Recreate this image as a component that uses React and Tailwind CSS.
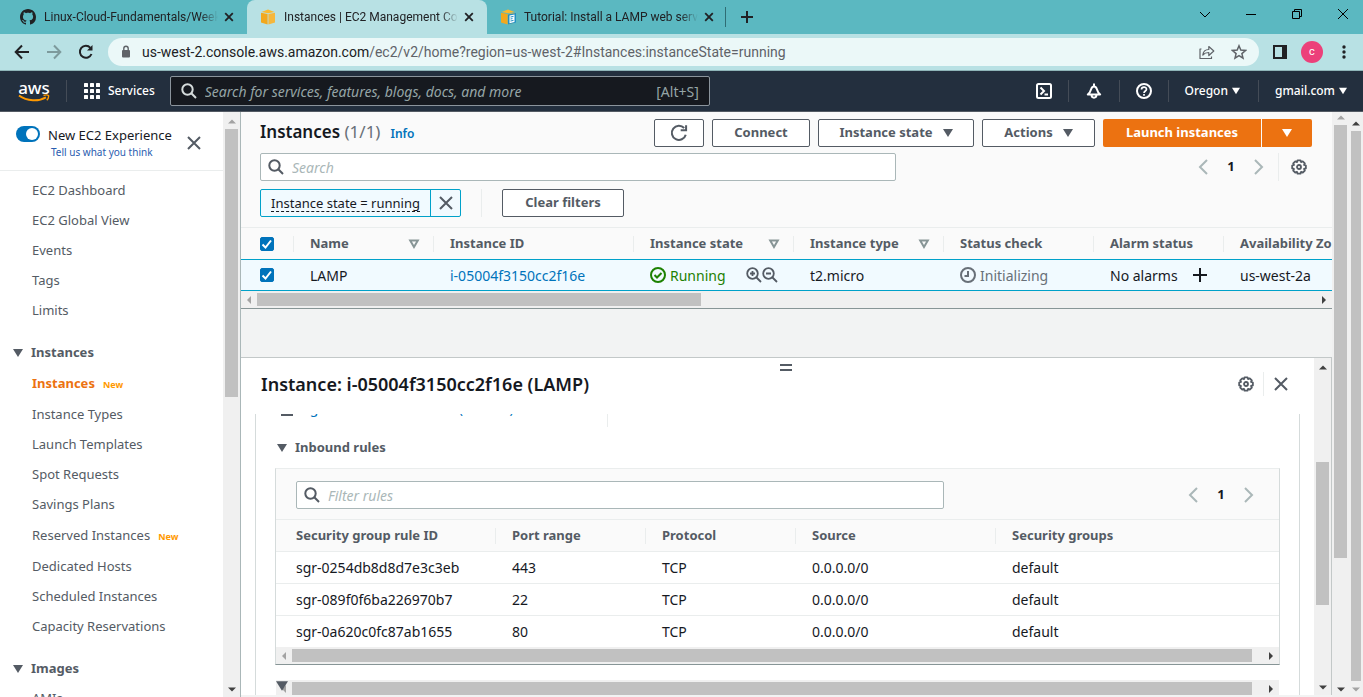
import React from "react";

const UI = "font-['Noto_Sans','Open_Sans',sans-serif]";
const CHROME = "font-[Roboto,'Noto_Sans',sans-serif]";

function Triangle({ className = "h-2.5 w-2.5", dir = "down" }) {
  const d = {
    down: "M0 1h10L5 9z",
    up: "M1 7.5h8L5 3.5z",
    left: "M7 1v8L3 5z",
    right: "M3 1v8L7 5z",
    smalldown: "M1 3.5h8L5 7.5z",
  }[dir];
  return (
    <svg viewBox="0 0 10 10" className={`shrink-0 ${className}`} fill="currentColor" aria-hidden="true">
      <path d={d} />
    </svg>
  );
}

function Icon({ children, className = "h-4 w-4", width = 2, box = 16 }) {
  return (
    <svg
      viewBox={`0 0 ${box} ${box}`}
      className={`shrink-0 ${className}`}
      fill="none"
      stroke="currentColor"
      strokeWidth={width}
      aria-hidden="true"
    >
      {children}
    </svg>
  );
}

const SearchIcon = ({ className }) => (
  <Icon className={className}>
    <circle cx="6.5" cy="6.5" r="5.2" />
    <path d="M10.3 10.3 15 15" />
  </Icon>
);
const CloseIcon = ({ className = "h-4 w-4" }) => (
  <Icon className={className}>
    <path d="M2 2l12 12M14 2 2 14" />
  </Icon>
);
const TabClose = () => (
  <Icon className="h-2.5 w-2.5" box={10} width={1.8}>
    <path d="M1.2 1.2l7.6 7.6M8.8 1.2 1.2 8.8" />
  </Icon>
);
const GearIcon = () => (
  <Icon>
    <path
      d="M6.7 1h2.6l.5 1.6 1.5-.7 1.8 1.8-.7 1.5 1.6.5v2.6l-1.6.5.7 1.5-1.8 1.8-1.5-.7-.5 1.6H6.7l-.5-1.6-1.5.7-1.8-1.8.7-1.5L2 8.3V5.7l1.6-.5-.7-1.5 1.8-1.8 1.5.7z"
      transform="translate(-1.1 .2) scale(1.14 1.11)"
      strokeWidth="1.6"
      strokeLinejoin="round"
    />
    <circle cx="8" cy="8" r="2" strokeWidth="1.8" />
  </Icon>
);
const ChevronLeft = () => (
  <Icon className="h-4 w-4">
    <path d="M12 1 5 8l7 7" />
  </Icon>
);
const ChevronRight = () => (
  <Icon className="h-4 w-4">
    <path d="M4 1l7 7-7 7" />
  </Icon>
);
const SortIcon = () => (
  <Icon className="h-3 w-3 text-[#879596]" box={12}>
    <path d="M2.2 2.5h7.6L6 9z" />
  </Icon>
);

function Cube({ doc }) {
  return (
    <svg viewBox="0 0 16 16" className="h-4 w-4 shrink-0" aria-hidden="true">
      <path fill="#f2a81d" d="M1 3.8 7.6 5v10.4L1 13.5z" />
      <path fill="#f6b73c" d="M8.4 5 15 3.8v9.7l-6.6 1.9z" />
      <path fill="#fbb92d" d="M1.4 3 8 .6 14.6 3 8 4.3z" />
      {doc && (
        <g>
          <path fill="#1f8fc4" d="M8 5.500l8-1.500v9.500l-8 2z" />
          <path fill="#fff" d="M9.5 6.500l5-1v7.500l-5 1.200z" />
          <path stroke="#1f8fc4" d="M10.5 8l3-.6M10.5 10l2-.4M10.5 12l3-.6" />
        </g>
      )}
    </svg>
  );
}

function VScroll({ thumb, topMuted, bottomMuted, className = "w-[17px] pt-1" }) {
  return (
    <div className={`flex shrink-0 flex-col items-center bg-[#f0f0f0] px-0.5 ${className}`}>
      <Triangle dir="up" className={`mb-[3px] h-2.5 w-2.5 ${topMuted ? "text-[#a3a3a3]" : "text-[#404040]"}`} />
      <div className="flex w-full flex-1 flex-col">
        <div className={`w-full bg-[#c1c1c1] ${thumb}`} />
      </div>
      <Triangle dir="smalldown" className={`my-[3px] h-2.5 w-2.5 ${bottomMuted ? "text-[#a3a3a3]" : "text-[#404040]"}`} />
    </div>
  );
}

function HScroll({ thumb }) {
  return (
    <div className="flex h-[17px] shrink-0 items-center bg-[#f0f0f0]">
      <div className="flex w-4 shrink-0 justify-center">
        <Triangle dir="left" className="h-2.5 w-2.5 text-[#a3a3a3]" />
      </div>
      <div className="min-w-0 flex-1">
        <div className={`h-[13px] bg-[#c1c1c1] ${thumb}`} />
      </div>
      <div className="flex w-[17px] shrink-0 justify-center">
        <Triangle dir="right" className="h-2.5 w-2.5 text-[#404040]" />
      </div>
    </div>
  );
}

function BrowserTab({ icon, title, active }) {
  return (
    <div className={`flex w-60 shrink-0 items-center px-[13px] ${active ? "rounded-t-lg bg-[#b8e1e4]" : ""}`}>
      {icon}
      <span className="ml-2 w-[177px] overflow-hidden whitespace-nowrap text-[12px] [mask-image:linear-gradient(to_right,black_90%,transparent)]">
        {title}
      </span>
      <button aria-label="Close tab" className="ml-1.5">
        <TabClose />
      </button>
    </div>
  );
}

function BrowserChrome() {
  return (
    <div className={`shrink-0 text-[#202124] ${CHROME}`}>
      <div className="flex h-[34px] bg-[#5bb8c1]">
        <div className="flex pl-[7px]">
          <BrowserTab
            title="Linux-Cloud-Fundamentals/Week"
            icon={
              <svg viewBox="0 0 16 16" className="h-4 w-4 shrink-0" fill="currentColor" aria-hidden="true">
                <path d="M8 0C3.58 0 0 3.58 0 8c0 3.54 2.29 6.53 5.47 7.59.4.07.55-.17.55-.38 0-.19-.01-.82-.01-1.49-2.01.37-2.53-.49-2.69-.94-.09-.23-.48-.94-.82-1.13-.28-.15-.68-.52-.01-.53.63-.01 1.08.58 1.23.82.72 1.21 1.87.87 2.33.66.07-.52.28-.87.51-1.07-1.78-.2-3.64-.89-3.64-3.95 0-.87.31-1.59.82-2.15-.08-.2-.36-1.02.08-2.12 0 0 .67-.21 2.2.82.64-.18 1.32-.27 2-.27s1.36.09 2 .27c1.53-1.04 2.2-.82 2.2-.82.44 1.1.16 1.92.08 2.12.51.56.82 1.27.82 2.15 0 3.07-1.87 3.75-3.65 3.95.29.25.54.73.54 1.48 0 1.07-.01 1.93-.01 2.2 0 .21.15.46.55.38A8.01 8.01 0 0 0 16 8c0-4.42-3.58-8-8-8z" />
              </svg>
            }
          />
          <BrowserTab active title="Instances | EC2 Management Con" icon={<Cube />} />
          <BrowserTab title="Tutorial: Install a LAMP web serve" icon={<Cube doc />} />
        </div>
        <span className="ml-[-2px] h-5 w-px self-center bg-[#2f6d74]" />
        <button aria-label="New tab" className="ml-2.5 px-1">
          <Icon className="h-3.5 w-3.5" box={14}>
            <path d="M7 1v12M1 7h12" />
          </Icon>
        </button>
        <div className="ml-auto flex items-center gap-9 pr-[15px] pb-1.5 text-black">
          <button aria-label="Search tabs">
            <Icon className="h-2.5 w-2.5" box={10} width={1}>
              <path d="M0 3l5 5 5-5" />
            </Icon>
          </button>
          <button aria-label="Minimize">
            <Icon className="h-2.5 w-2.5" box={10} width={1}>
              <path d="M0 5.5h10" />
            </Icon>
          </button>
          <button aria-label="Restore">
            <Icon className="h-2.5 w-2.5" box={10} width={1}>
              <path d="M.5 2.5h7v7h-7zM2.5 2V.5h7v7H8" />
            </Icon>
          </button>
          <button aria-label="Close window">
            <Icon className="h-2.5 w-2.5" box={10} width={1}>
              <path d="M0 0l10 10M10 0 0 10" />
            </Icon>
          </button>
        </div>
      </div>
      <div className="flex h-[37px] items-center border-b border-[#8fb5b8] bg-[#b8e1e4] pr-3">
        <div className="flex w-[108px] items-center gap-4 pl-3.5">
          <button aria-label="Back">
            <Icon>
              <path d="M15 8H2M8 1.5 1.7 8 8 14.5" />
            </Icon>
          </button>
          <button aria-label="Forward" className="text-[#7d9a9c]">
            <Icon>
              <path d="M1 8h13M8 1.5 14.3 8 8 14.5" />
            </Icon>
          </button>
          <button aria-label="Reload">
            <Icon>
              <path d="M13.5 10A6 6 0 1 1 12.4 3.8" />
              <path d="M14.5 1v5.5H9z" fill="currentColor" stroke="none" />
            </Icon>
          </button>
        </div>
        <div className="flex h-7 flex-1 items-center rounded-full bg-[#ebf8f8] px-3">
          <svg viewBox="0 0 12 14" className="h-3.5 w-3 shrink-0 text-[#5f6368]" aria-hidden="true">
            <rect x="2" y="5" width="8" height="7.5" rx="1" fill="currentColor" />
            <path d="M3.8 5.5V3.5a2.2 2.2 0 0 1 4.4 0v2" fill="none" stroke="currentColor" strokeWidth="1.4" />
          </svg>
          <div className="ml-2.5 flex-1 text-[14px] text-[#5f6368]">
            <span className="text-[#202124]">us-west-2.console.aws.amazon.com</span>
            /ec2/v2/home?region=us-west-2#Instances:instanceState=running
          </div>
          <button aria-label="Share" className="mr-4 text-[#5f6368]">
            <Icon width={1.2}>
              <path d="M2.500 5H1v9.500h11.500v-2M3.800 11c.4-3.5 2.7-5.5 6-5.5V2.500L14.800 7l-5 4.500V8.500c-2.700 0-4.600.8-6 2.500z" strokeLinejoin="round" />
            </Icon>
          </button>
          <button aria-label="Bookmark" className="text-[#5f6368]">
            <Icon width={1.5}>
              <path d="M8 1.8l1.8 4.300 4.700.4-3.600 3.100 1.100 4.600L8 11.700l-4 2.500 1.100-4.600L1.500 6.500l4.700-.4z" />
            </Icon>
          </button>
        </div>
        <button aria-label="Side panel" className="ml-3.5">
          <svg viewBox="0 0 14 14" className="h-3.5 w-3.5" aria-hidden="true">
            <path fill="currentColor" fillRule="evenodd" d="M0 0h14v14H0zM2 2v10h7V2z" />
          </svg>
        </button>
        <button className="ml-3.5 flex h-[22px] w-[22px] items-center justify-center rounded-full bg-[#ec407a] text-[11px] text-white">
          c
        </button>
        <button aria-label="Menu" className="ml-3.5">
          <svg viewBox="0 0 14 14" className="h-3.5 w-3.5" fill="currentColor" aria-hidden="true">
            <circle cx="7" cy="2" r="1.7" />
            <circle cx="7" cy="7" r="1.7" />
            <circle cx="7" cy="12" r="1.7" />
          </svg>
        </button>
      </div>
    </div>
  );
}

function AwsHeader() {
  const rule = <span className="h-[22px] w-px bg-[#444c57]" />;
  return (
    <header className="flex h-[41px] shrink-0 items-center border-b border-[#545b64] bg-[#232f3e] pr-4 text-[12px] font-medium text-white">
      <a href="#home" aria-label="AWS" className="ml-[18px] flex w-8 flex-col items-center">
        <span className="text-[17px] leading-[13px] font-medium">aws</span>
        <svg viewBox="0 0 32 8" className="h-2 w-8" fill="none" stroke="#ff9900" strokeWidth="2" aria-hidden="true">
          <path d="M1 1.5c8 6 20 6 27 1.8" />
          <path d="M25.5 1.5c2-.7 4-.7 5 0 .3 1.5-.4 3.500-1.700 4.800" strokeWidth="1.4" />
        </svg>
      </a>
      <span className="ml-4 h-[22px] w-px bg-[#444c57]" />
      <button className="ml-[17px] flex items-center gap-2">
        <svg viewBox="0 0 16 16" className="h-4 w-4" fill="currentColor" aria-hidden="true">
          {[0, 6, 12].map((y) => [0, 6, 12].map((x) => <rect key={`${x}-${y}`} x={x} y={y} width="4" height="4" rx=".6" />))}
        </svg>
        Services
      </button>
      <label className="ml-[15px] flex h-[30px] w-[540px] items-center rounded-xs border border-[#8b949c] bg-[#16191f] px-2.5 font-normal">
        <SearchIcon className="h-4 w-4 text-[#d5dbdb]" />
        <input
          aria-label="Search AWS"
          placeholder="Search for services, features, blogs, docs, and more"
          className="ml-2 flex-1 bg-transparent text-[14px] outline-none placeholder:text-[#95a5a6] placeholder:italic"
        />
        <span className="text-[14px] text-[#95a5a6]">[Alt+S]</span>
      </label>
      <div className="ml-auto flex items-center">
        <button aria-label="CloudShell" className="mr-4">
          <Icon>
            <rect x="1" y="1" width="14" height="14" rx="1.5" />
            <path d="M4.5 4.5 8 8l-3.5 3.5M8.5 11.5h3.5" />
          </Icon>
        </button>
        {rule}
        <button aria-label="Notifications" className="mx-[17px]">
          <Icon>
            <path d="M8 .5v3M1.8 11.5C4 9.8 4.6 8.2 5.2 6 5.7 4.5 6.5 3.500 8 3.500s2.300 1 2.800 2.500c.6 2.200 1.200 3.800 3.400 5.500zM5.500 12c.2 3.500 4.800 3.500 5 0" strokeLinejoin="round" />
          </Icon>
        </button>
        {rule}
        <button aria-label="Help" className="mx-4">
          <Icon>
            <circle cx="8" cy="8" r="7" />
            <path d="M5.5 6.5C5.5 3.3 10.500 3.300 10.500 6.300 10.500 8 8 8 8 10M8 11v1.800" strokeWidth="1.7" />
          </Icon>
        </button>
        {rule}
        <button className="mr-[18px] ml-4 flex items-center gap-1">
          Oregon <Triangle className="h-2 w-2" />
        </button>
        {rule}
        <button className="ml-4 flex items-center gap-1">
          gmail.com <Triangle className="h-2 w-2" />
        </button>
      </div>
    </header>
  );
}

const NAV = [
  { items: ["EC2 Dashboard", "EC2 Global View", "Events", "Tags", "Limits"] },
  {
    title: "Instances",
    items: [
      "Instances",
      "Instance Types",
      "Launch Templates",
      "Spot Requests",
      "Savings Plans",
      "Reserved Instances",
      "Dedicated Hosts",
      "Scheduled Instances",
      "Capacity Reservations",
    ],
    active: "Instances",
    fresh: ["Instances", "Reserved Instances"],
  },
  { title: "Images", items: ["AMIs"] },
];

function Sidebar() {
  return (
    <div className="flex w-60 shrink-0">
      <nav className="min-w-0 flex-1 overflow-hidden bg-white text-[13px] text-[#545b64]">
        <div className="flex h-[59px] items-center border-b border-[#eaeded] pl-4">
          <label className="flex text-[#16191f]">
            <input type="checkbox" defaultChecked className="peer sr-only" />
            <span className="mt-1 flex h-4 w-6 justify-end rounded-full bg-[#0073bb] p-0.5">
              <span className="h-3 w-3 rounded-full bg-white" />
            </span>
            <span className="ml-2 flex flex-col pt-1 leading-[18px] whitespace-nowrap">
              New EC2 Experience
              <a href="#feedback" className="ml-[3px] text-[10px] leading-4 text-[#2a5db0]">
                Tell us what you think
              </a>
            </span>
          </label>
          <button aria-label="Close navigation" className="mt-1 ml-3.5">
            <CloseIcon />
          </button>
        </div>
        <div className="flex flex-col gap-3 pt-[5px]">
          {NAV.map((g, i) => (
            <section key={i}>
              {g.title && (
                <button className="flex h-[30px] items-center gap-2 pl-[13px] font-bold">
                  <Triangle /> {g.title}
                </button>
              )}
              <ul>
                {g.items.map((it) => {
                  const fresh = g.fresh?.includes(it);
                  return (
                    <li key={it} className={`flex items-center pl-8 ${fresh ? "h-8" : "h-[30px]"}`}>
                      <a href={`#${it}`} className={g.active === it ? "font-bold text-[#ec7211]" : ""}>
                        {it}
                      </a>
                      {fresh && <span className="ml-2 pt-0.5 text-[9px] font-bold text-[#ff9900]">New</span>}
                    </li>
                  );
                })}
              </ul>
            </section>
          ))}
        </div>
      </nav>
      <VScroll topMuted thumb="h-[268px]" />
    </div>
  );
}

function Button({ children, className = "px-5" }) {
  return (
    <button
      className={`flex h-7 items-center justify-center gap-2 rounded-xs border border-[#545b64] bg-white text-[13px] font-bold whitespace-nowrap text-[#545b64] ${className}`}
    >
      {children}
    </button>
  );
}

function SearchBox({ placeholder, className }) {
  return (
    <label className={`flex h-7 items-center rounded-xs border border-[#aab7b8] bg-white px-[7px] ${className}`}>
      <SearchIcon className="h-4 w-4 text-[#545b64]" />
      <input
        aria-label={placeholder}
        placeholder={placeholder}
        className="ml-2 flex-1 bg-transparent text-[14px] outline-none placeholder:text-[#aab7b8] placeholder:italic"
      />
    </label>
  );
}

function Pager() {
  return (
    <div className="flex items-center gap-3.5 text-[#aab7b8]">
      <button aria-label="Previous page">
        <ChevronLeft />
      </button>
      <span className="w-3 text-center text-[13px] font-bold text-[#16191f]">1</span>
      <button aria-label="Next page">
        <ChevronRight />
      </button>
    </div>
  );
}

function Check({ label }) {
  return (
    <label className="relative flex h-3.5 w-3.5">
      <input
        type="checkbox"
        defaultChecked
        aria-label={label}
        className="h-3.5 w-3.5 appearance-none rounded-xs border border-[#0073bb] bg-[#0073bb]"
      />
      <svg viewBox="0 0 14 14" className="pointer-events-none absolute inset-0" fill="none" stroke="#fff" strokeWidth="2" aria-hidden="true">
        <path d="M2.5 7.5 5.5 10.5 11 3.5" />
      </svg>
    </label>
  );
}

function HeadCell({ children, sort, last, className = "px-4" }) {
  return (
    <th className="p-0 text-left font-bold whitespace-nowrap">
      <div className={`flex h-4 items-center justify-between ${last ? "" : "border-r border-[#eaeded]"} ${className}`}>
        {children}
        {sort && <SortIcon />}
      </div>
    </th>
  );
}

function Magnifier({ plus }) {
  return (
    <Icon>
      <circle cx="6.5" cy="6.5" r="5.3" strokeWidth="1.8" />
      <path d={plus ? "M10.5 10.5 15 15M4 6.5h5M6.5 4v5" : "M10.5 10.5 15 15M4 6.5h5"} strokeWidth="1.8" />
    </Icon>
  );
}

function InstanceList() {
  const cell = "border-y border-[#00a1c9] pr-3 pl-4";
  return (
    <section className="shrink-0 border-b border-[#879596] bg-[#fafafa]">
      <div className="flex h-[115px] flex-col gap-1.5 pt-[7px] pr-5 pl-[19px]">
        <div className="flex h-7 items-center">
          <h1 className="pb-0.5 text-[17px] leading-6 font-semibold text-[#16191f]">
            Instances <span className="font-normal text-[#687078]">(1/1)</span>
          </h1>
          <a href="#info" className="mt-0.5 ml-2.5 text-[12px] font-semibold text-[#0073bb]">
            Info
          </a>
          <div className="ml-auto flex gap-2">
            <Button className="w-[50px]">
              <span className="sr-only">Refresh</span>
              <Icon className="h-[18px] w-[18px]">
                <path d="M14 9.5A6.3 6.3 0 1 1 12.6 3.6M14.3 1v4.5H9.5" strokeWidth="1.8" />
              </Icon>
            </Button>
            <Button className="w-[98px]">Connect</Button>
            <Button className="w-[156px]">
              Instance state <Triangle className="ml-0.5 h-2.5 w-2.5" />
            </Button>
            <Button className="w-[113px]">
              Actions <Triangle className="ml-0.5 h-2.5 w-2.5" />
            </Button>
            <div className="flex gap-px text-[13px] font-bold text-white">
              <button className="h-7 w-[158px] rounded-l-xs bg-[#ec7211]">Launch instances</button>
              <button aria-label="More launch options" className="flex h-7 w-[50px] items-center justify-center rounded-r-xs bg-[#ec7211]">
                <Triangle />
              </button>
            </div>
          </div>
        </div>
        <div className="flex items-center justify-between">
          <SearchBox placeholder="Search" className="w-[636px]" />
          <div className="flex items-center">
            <Pager />
            <span className="ml-[11px] h-7 w-px bg-[#eaeded]" />
            <button aria-label="Preferences" className="mr-[5px] ml-3 text-[#545b64]">
              <GearIcon />
            </button>
          </div>
        </div>
        <div className="flex items-center pt-0.5">
          <div className="flex h-7 rounded-xs border border-[#00a1c9] bg-[#f1faff] text-[13px] text-[#16191f]">
            <button className="flex w-[169px] items-center justify-center">
              <span className="border-b border-dashed border-[#16191f] leading-4">Instance state = running</span>
            </button>
            <button aria-label="Remove filter" className="flex w-[30px] items-center justify-center border-l border-[#00a1c9] text-[#545b64]">
              <CloseIcon />
            </button>
          </div>
          <span className="ml-5 h-7 w-px bg-[#eaeded]" />
          <Button className="ml-5 w-[122px]">Clear filters</Button>
        </div>
      </div>
      <div className="overflow-hidden border-t border-[#eaeded]">
        <table className="w-[1183px] table-fixed border-separate border-spacing-0 text-[14px] text-[#16191f]">
          <colgroup>
            <col className="w-[53px]" />
            <col className="w-[140px]" />
            <col className="w-[200px]" />
            <col className="w-[160px]" />
            <col className="w-[150px]" />
            <col className="w-[150px]" />
            <col className="w-[130px]" />
            <col className="w-[200px]" />
          </colgroup>
          <thead>
            <tr className="h-[31px] text-[13px] text-[#545b64]">
              <HeadCell className="pl-[19px]">
                <Check label="Select all" />
              </HeadCell>
              <HeadCell sort className="pr-[13px] pl-4">Name</HeadCell>
              <HeadCell>Instance ID</HeadCell>
              <HeadCell sort className="pr-[13px] pl-4">Instance state</HeadCell>
              <HeadCell sort className="pr-[13px] pl-4">Instance type</HeadCell>
              <HeadCell>Status check</HeadCell>
              <HeadCell>Alarm status</HeadCell>
              <HeadCell last>Availability Zone</HeadCell>
            </tr>
          </thead>
          <tbody>
            <tr className="h-8 bg-[#f1faff]">
              <td className="border-y border-[#00a1c9] pl-[19px]">
                <Check label="Select LAMP" />
              </td>
              <td className={cell}>LAMP</td>
              <td className={cell}>
                <a href="#instance" className="text-[#0073bb]">
                  i-05004f3150cc2f16e
                </a>
              </td>
              <td className="border-y border-[#00a1c9] px-4">
                <div className="flex items-center justify-between whitespace-nowrap text-[#1d8102]">
                  <span className="flex items-center gap-1">
                    <Icon>
                      <circle cx="8" cy="8" r="7" />
                      <path d="M4.5 8 7 10.5 11.5 6" />
                    </Icon>
                    Running
                  </span>
                  <span className="flex text-[#545b64]">
                    <Magnifier plus />
                    <Magnifier />
                  </span>
                </div>
              </td>
              <td className={cell}>t2.micro</td>
              <td className={`${cell} text-[#687078]`}>
                <span className="flex items-center gap-1">
                  <Icon>
                    <circle cx="8" cy="8" r="7" />
                    <path d="M8 4v5H4.5" />
                  </Icon>
                  Initializing
                </span>
              </td>
              <td className="border-y border-[#00a1c9] px-4">
                <span className="flex items-center justify-between whitespace-nowrap">
                  No alarms
                  <button aria-label="Create alarm">
                    <Icon>
                      <path d="M8 1v14M1 8h14" />
                    </Icon>
                  </button>
                </span>
              </td>
              <td className={cell}>us-west-2a</td>
            </tr>
          </tbody>
        </table>
      </div>
      <HScroll thumb="w-[42%]" />
    </section>
  );
}

const RULES = [
  ["sgr-0254db8d8d7e3c3eb", "443", "TCP", "0.0.0.0/0", "default"],
  ["sgr-089f0f6ba226970b7", "22", "TCP", "0.0.0.0/0", "default"],
  ["sgr-0a620c0fc87ab1655", "80", "TCP", "0.0.0.0/0", "default"],
];

function InboundRules() {
  return (
    <div className="mx-[19px] border border-[#d5dbdb] border-t-[#eaeded] border-b-[#879596] bg-[#fafafa]">
      <div className="flex h-[51px] items-center justify-between border-b border-[#eaeded] pt-0.5 pr-[22px] pl-5">
        <SearchBox placeholder="Filter rules" className="w-[648px]" />
        <Pager />
      </div>
      <table className="w-full table-fixed border-separate border-spacing-0 text-[14px] text-[#16191f]">
        <colgroup>
          <col className="w-[220px]" />
          <col className="w-[150px]" />
          <col className="w-[150px]" />
          <col className="w-[200px]" />
          <col />
        </colgroup>
        <thead>
          <tr className="h-[31px] text-[13px] text-[#545b64]">
            <HeadCell className="pl-5">Security group rule ID</HeadCell>
            <HeadCell>Port range</HeadCell>
            <HeadCell>Protocol</HeadCell>
            <HeadCell>Source</HeadCell>
            <HeadCell last>Security groups</HeadCell>
          </tr>
        </thead>
        <tbody>
          {RULES.map((r) => (
            <tr key={r[0]} className="h-8 bg-white">
              {r.map((c, i) => (
                <td key={i} className={`border-t border-[#eaeded] ${i === 0 ? "pl-5" : "px-4"}`}>
                  {c}
                </td>
              ))}
            </tr>
          ))}
        </tbody>
      </table>
      <HScroll thumb="w-[99%]" />
    </div>
  );
}

function DetailPanel() {
  return (
    <section className="flex min-h-0 flex-1 border-t border-r border-[#c3c8c8] bg-white">
      <div className="flex min-w-0 flex-1 flex-col">
        <div className="flex h-[13px] items-end justify-center pl-4">
          <button aria-label="Resize panel" className="h-[7px] w-3 border-y-2 border-[#545b64]" />
        </div>
        <div className="flex h-[43px] shrink-0 items-center justify-between pr-[25px] pb-[17px] pl-5">
          <h2 className="text-[18px] font-semibold text-[#16191f]">Instance: i-05004f3150cc2f16e (LAMP)</h2>
          <div className="flex items-center gap-[9px] text-[#545b64]">
            <button aria-label="Panel preferences">
              <GearIcon />
            </button>
            <span className="h-6 w-px bg-[#eaeded]" />
            <button aria-label="Close panel">
              <CloseIcon />
            </button>
          </div>
        </div>
        <div className="mx-3.5 flex min-h-0 flex-1 flex-col overflow-hidden border-x border-[#d5dbdb]">
          <div className="-mt-4 flex h-[29px] w-[352px] shrink-0 items-start border-r border-[#eaeded] pl-[25px] text-[14px]">
            <span className="mt-1.5 h-3 w-3 border-2 border-[#545b64]" />
            <a href="#sg" className="ml-2.5 leading-5 text-[#0073bb]">
              sg-0ec8a5e4bc20ce4a0 (default)
            </a>
          </div>
          <button className="ml-[21px] flex h-[41px] shrink-0 items-center gap-2 text-[13px] font-bold text-[#545b64]">
            <Triangle /> Inbound rules
          </button>
          <InboundRules />
          <div className="relative mx-5 mt-[15px]">
            <HScroll thumb="w-[99%]" />
            <span className="absolute top-0 left-0 text-[#545b64]">
              <Triangle className="h-3 w-3" />
            </span>
          </div>
        </div>
      </div>
      <VScroll thumb="mt-[87px] h-[143px]" />
    </section>
  );
}

export default function App() {
  return (
    <div className={`flex h-screen flex-col overflow-hidden ${UI}`}>
      <BrowserChrome />
      <AwsHeader />
      <div className="flex min-h-0 flex-1 bg-[#f2f3f3]">
        <Sidebar />
        <main className="flex min-w-0 flex-1 flex-col border-l border-[#aab7b8] pb-0.5">
          <InstanceList />
          <div className="h-12 shrink-0" />
          <DetailPanel />
        </main>
        <VScroll topMuted thumb="h-[433px]" className="w-[17px]" />
        <VScroll bottomMuted thumb="h-full" className="w-3.5 pt-1.5" />
      </div>
    </div>
  );
}
